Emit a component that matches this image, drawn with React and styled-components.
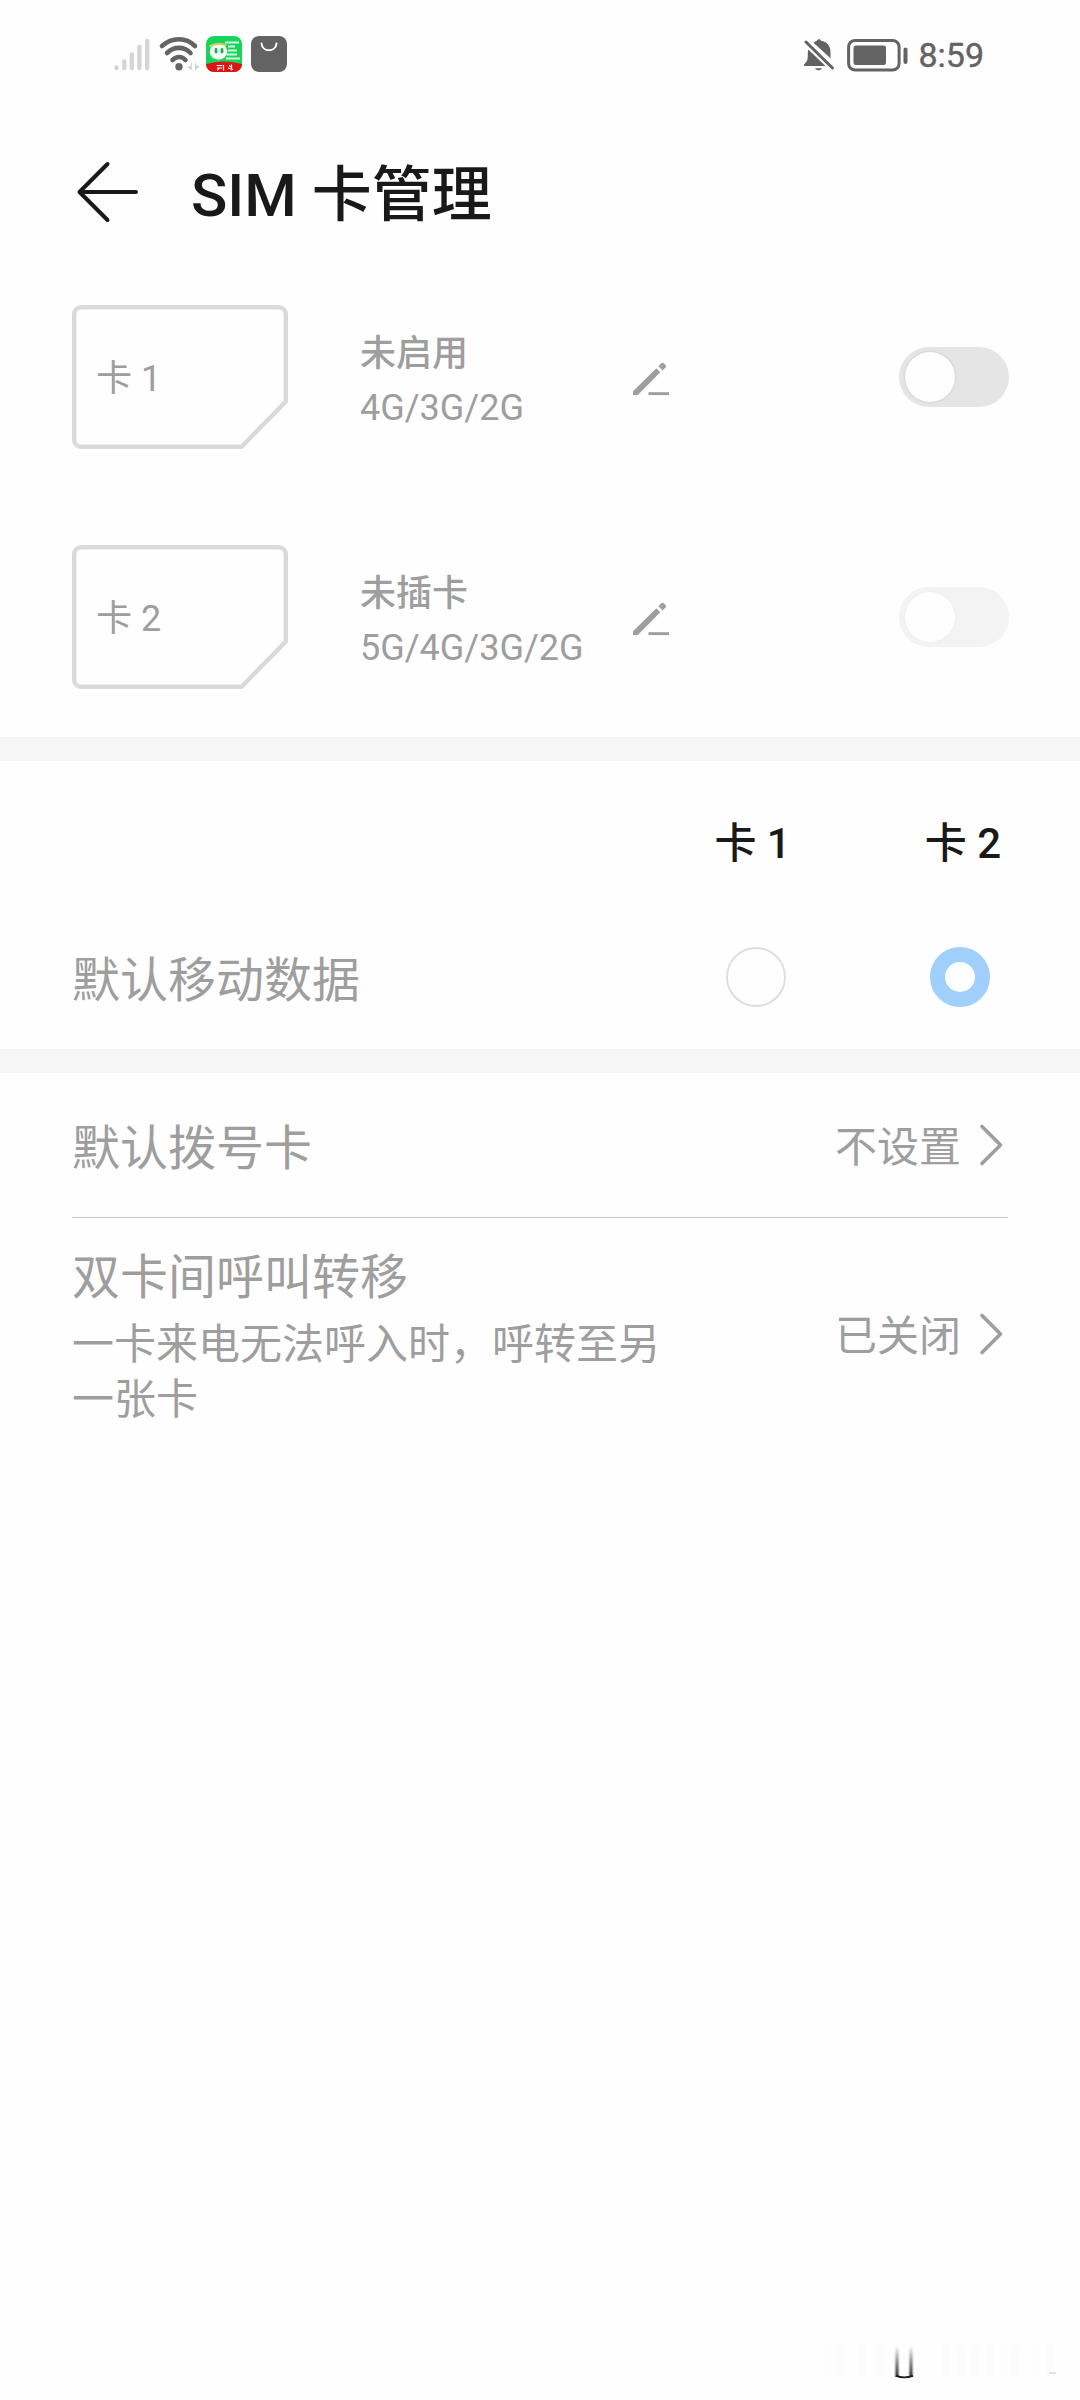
import React from "react";
import styled, { createGlobalStyle } from "styled-components";

const GlobalStyle = createGlobalStyle`
  *, *::before, *::after { box-sizing: border-box; }
  body {
    margin: 0;
    background: #fefefe;
    font-family: Roboto, "Noto Sans CJK SC", sans-serif;
    color: #191919;
  }
  svg { display: block; flex: none; }
`;

const Screen = styled.main`
  width: 1080px;
  height: 2400px;
  display: flex;
  flex-direction: column;
  background: #fefefe;
  overflow: hidden;
`;

const StatusBar = styled.div`
  height: 110px;
  flex: none;
  padding: 0 96px 0 113px;
  display: flex;
  align-items: center;
  justify-content: space-between;
`;

const StatusGroup = styled.div`
  display: flex;
  align-items: center;
  padding-bottom: ${(p) => p.$lift || 0}px;
`;

const StatusIcon = styled.svg`
  margin-left: ${(p) => p.$gap || 0}px;
`;

const Clock = styled.span`
  margin-left: 9px;
  font-size: 34px;
  line-height: 40px;
  color: #636363;
  -webkit-text-stroke: 0.4px #636363;
`;

const Header = styled.header`
  height: 147px;
  flex: none;
  padding: 22px 72px 0 75px;
  display: flex;
  align-items: center;
  gap: 50px;
`;

const BackButton = styled.button`
  margin: 0 0 5px;
  padding: 0;
  border: 0;
  background: none;
`;

const Title = styled.h1`
  margin: 0;
  padding-top: 2px;
  font-size: 60px;
  line-height: 70px;
  font-weight: 500;
`;

const SimRow = styled.section`
  height: 240px;
  flex: none;
  padding: 0 71px 0 72px;
  display: grid;
  grid-template-columns: 288px 273px 1fr auto;
  align-items: center;
  color: #9e9e9e;
`;

const SimShape = styled.div`
  width: 216px;
  height: 144px;
  display: grid;
  align-items: center;

  > * { grid-area: 1 / 1; }
`;

const SimName = styled.span`
  padding: 4px 0 0 24px;
  font-size: 36px;
  line-height: 42px;
`;

const SimInfo = styled.div`
  padding-top: 7px;
  font-size: 36px;
  line-height: 54px;
  white-space: nowrap;
`;

const SimState = styled.div`
  font-weight: 500;
`;

const EditButton = styled.button`
  width: 36px;
  margin: 0;
  padding: 3px 0 0;
  border: 0;
  background: none;
`;

const Toggle = styled.div`
  width: 110px;
  height: 60px;
  padding: 5px;
  border-radius: 30px;
  background: ${(p) => (p.$faint ? "#f3f3f3" : "#e5e5e5")};
`;

const Knob = styled.div`
  width: 50px;
  height: 50px;
  margin-left: 1px;
  border-radius: 50%;
  background: #fefefe;
  box-shadow: 0 0 3px rgba(0, 0, 0, ${(p) => (p.$faint ? 0.04 : 0.14)});
`;

const Band = styled.div`
  height: 24px;
  flex: none;
  background: #f6f6f6;
`;

const DataSection = styled.section`
  height: 288px;
  flex: none;
  padding: 0 72px;
`;

const ColumnHeads = styled.div`
  height: 142px;
  padding: 23px 7px 0 0;
  display: flex;
  align-items: center;
  justify-content: flex-end;
  gap: 134px;
  font-size: 42px;
  line-height: 50px;
  font-weight: 500;
`;

const DataRow = styled.div`
  height: 148px;
  padding-right: 18px;
  display: flex;
  align-items: center;
`;

const Label = styled.div`
  font-size: 48px;
  line-height: 56px;
  color: #9e9e9e;
`;

const DataLabel = styled(Label)`
  flex: 1;
  padding-top: 8px;
`;

const Radio = styled.div`
  width: 60px;
  height: 60px;
  margin-left: ${(p) => (p.$checked ? 144 : 0)}px;
  border-radius: 50%;
  border: ${(p) => (p.$checked ? "15px solid #a0cffc" : "2.5px solid #dfdfdf")};
`;

const Entry = styled.section`
  height: ${(p) => p.$height}px;
  flex: none;
  margin: 0 72px;
  padding-right: 4px;
  display: flex;
  align-items: center;
  justify-content: space-between;
  border-bottom: ${(p) => (p.$ruled ? "1px solid #c8c8c8" : "0")};
`;

const EntryText = styled.div`
  width: 600px;
  padding-top: ${(p) => p.$shift || 0}px;
`;

const Description = styled.p`
  margin: 11px 0 0;
  font-size: 42px;
  line-height: 55px;
  color: #9e9e9e;
`;

const EntryValue = styled.div`
  padding-bottom: ${(p) => p.$lift || 0}px;
  display: flex;
  align-items: center;
  gap: 17px;
  font-size: 42px;
  line-height: 50px;
  color: #9e9e9e;
`;

const ValueText = styled.span`
  padding-top: 6px;
`;

const Spacer = styled.div`
  flex: 1;
`;

const Footer = styled.footer`
  flex: none;
  padding: 0 24px 20px 0;
  display: flex;
  justify-content: flex-end;
`;

function Signal() {
  return (
    <StatusIcon width="38" height="36" viewBox="0 0 38 36" stroke="#d5d5d5" strokeWidth="4.400" strokeLinecap="round">
      <path d="M3.500 31.500v.5M11.300 25.500v6.500M18.800 18.500v13.500M26.400 11v21M34.200 5v27" />
    </StatusIcon>
  );
}

function Wifi() {
  return (
    <StatusIcon $gap={7} width="44" height="38" viewBox="0 0 44 38" fill="none" stroke="#636363" strokeWidth="4.600" strokeLinecap="round">
      <path d="M4 11C14 2 28 2 37 11M9 18C16 11.200 26 11.200 32.500 18M14.500 25C18.500 21 24 21 27.500 25" />
      <circle cx="21" cy="31.800" r="3.700" fill="#636363" stroke="none" />
      <path d="M33.800 26v9.500L29 31.500h3.200zM37 26v9.500l4.800-4.500h-3.200z" fill="#cfcfcf" stroke="none" />
    </StatusIcon>
  );
}

function GameBadge() {
  return (
    <StatusIcon $gap={4} width="36" height="36" viewBox="0 0 36 36">
      <defs>
        <clipPath id="badge"><rect width="36" height="36" rx="8" /></clipPath>
      </defs>
      <g clipPath="url(#badge)">
        <rect width="36" height="36" fill="#17d45d" />
        <path d="M19 6.500h14M22 10.500h7M22 14.500h9M21 18.500h10M20 22.500h14" stroke="#d3f9df" strokeWidth="1.800" />
        <ellipse cx="12.500" cy="15.500" rx="8.800" ry="8.200" fill="#f2fff2" />
        <path d="M3.500 10.500q8-4.500 17-1" fill="none" stroke="#d0d060" strokeWidth="2.200" />
        <path d="M10 13.500v2.500M16 13.500v2.500" stroke="#22ae59" strokeWidth="2.800" strokeLinecap="round" />
        <path d="M0 28q9-2.500 18-2.500t18 2.500v8H0z" fill="#df1414" />
        <path d="M10.500 29.500h6M11 32h5M13 32l-1.500 2.500M17.500 29v5.500M23 29.500l3 2M22 32l5 1.500M25.500 28.500v6" stroke="#fff" strokeWidth="1.200" fill="none" />
      </g>
    </StatusIcon>
  );
}

function Bag() {
  return (
    <StatusIcon $gap={9} width="36" height="36" viewBox="0 0 36 36">
      <rect width="36" height="36" rx="8" fill="#636363" />
      <path d="M10.500 7.500c1 9 14 9 15 0" fill="none" stroke="#fff" strokeWidth="2" strokeLinecap="round" />
    </StatusIcon>
  );
}

function Muted() {
  return (
    <StatusIcon width="32" height="34" viewBox="0 0 32 34" fill="#636363">
      <path d="M10.500 4.800C12 3.500 13 3 14 2.800c.5-2 3.500-2 4 0 6 1 9.500 5 9.500 11v6.500z" />
      <path d="M5.300 11.500 22.500 28H2c-1 0-1.400-1-.7-1.800C4.500 23 4.800 21 4.800 17c0-2 0-3.500.5-5.500z" />
      <path d="M12 30.200h7c-1.500 2.700-5.500 2.700-7 0z" />
      <path d="M3 4l26.500 26" stroke="#636363" strokeWidth="3" strokeLinecap="round" />
    </StatusIcon>
  );
}

function Battery() {
  return (
    <StatusIcon $gap={12} width="62" height="34" viewBox="0 0 62 34">
      <rect x="1.600" y="2.500" width="50.500" height="29.500" rx="6.500" fill="none" stroke="#636363" strokeWidth="3" />
      <rect x="6.500" y="7.500" width="32.500" height="19.500" rx="2.500" fill="#636363" />
      <rect x="56.500" y="9.500" width="4" height="16.500" rx="2" fill="#636363" />
    </StatusIcon>
  );
}

function BackArrow() {
  return (
    <svg width="66" height="66" viewBox="0 0 66 66" fill="none" stroke="#191919" strokeWidth="4" strokeLinecap="round" strokeLinejoin="round">
      <path d="M61 33H5M32.500 5 4.500 33l28 28" />
    </svg>
  );
}

function SimOutline() {
  return (
    <svg width="216" height="144" viewBox="0 0 216 144" fill="none" stroke="#d9dbda" strokeWidth="4.400">
      <path d="M9 2.200H207A6.800 6.800 0 0 1 213.800 9V96.500L169.500 141.800H9A6.800 6.800 0 0 1 2.200 135V9A6.800 6.800 0 0 1 9 2.200Z" />
    </svg>
  );
}

function Pencil() {
  return (
    <svg width="36" height="36" viewBox="0 0 36 36" fill="#9e9e9e">
      <path d="M23.300 7.300 27.300 11.300 4.800 34H0V30.200Z" />
      <path d="M28.200 2.300q1.300-1.300 2.600 0l1.700 1.700q1.300 1.300 0 2.600L29.600 9.400 25.400 5.200Z" />
      <rect x="15.500" y="31.200" width="20.500" height="2.900" />
    </svg>
  );
}

function Chevron() {
  return (
    <svg width="26" height="44" viewBox="0 0 26 44" fill="none" stroke="#9e9e9e" strokeWidth="3.600" strokeLinecap="round" strokeLinejoin="round">
      <path d="M4 3.500l18.500 18.500L4 40.500" />
    </svg>
  );
}

function Smudge() {
  const streaks = [0, 12, 34, 52, 118, 133, 147, 162, 176, 187, 208, 222];
  return (
    <svg width="232" height="36" viewBox="0 0 232 36">
      <defs>
        <linearGradient id="fade" x1="0" y1="0" x2="0" y2="1">
          <stop offset="0" stopColor="#333" stopOpacity="0" />
          <stop offset="0.5" stopColor="#333" stopOpacity="0.6" />
          <stop offset="1" stopColor="#111" stopOpacity="1" />
        </linearGradient>
        <linearGradient id="side" x1="0" y1="0" x2="1" y2="0">
          <stop offset="0" stopColor="#fefefe" />
          <stop offset="0.5" stopColor="#fefefe" stopOpacity="0" />
          <stop offset="1" stopColor="#fefefe" />
        </linearGradient>
      </defs>
      {streaks.map((x) => (
        <rect key={x} x={x} y="1" width="8" height="31" fill="#fcfcfc" />
      ))}
      <rect x="70" y="2" width="6" height="31" fill="url(#fade)" />
      <rect x="70" y="2" width="6" height="31" fill="url(#side)" />
      <rect x="84" y="2" width="6" height="31" fill="url(#fade)" />
      <rect x="84" y="2" width="6" height="31" fill="url(#side)" />
      <path d="M72 31.800q8 3 17 0" fill="none" stroke="#1c1c1c" strokeWidth="1.800" />
      <path d="M225 29h7" stroke="#dcdcdc" strokeWidth="1.500" />
    </svg>
  );
}

function SimCard({ name, state, networks, faint }) {
  return (
    <SimRow>
      <SimShape>
        <SimOutline />
        <SimName>{name}</SimName>
      </SimShape>
      <SimInfo>
        <SimState>{state}</SimState>
        <div>{networks}</div>
      </SimInfo>
      <EditButton aria-label="编辑">
        <Pencil />
      </EditButton>
      <Toggle $faint={faint}>
        <Knob $faint={faint} />
      </Toggle>
    </SimRow>
  );
}

export default function App() {
  return (
    <>
      <GlobalStyle />
      <Screen>
        <StatusBar>
          <StatusGroup $lift={2}>
            <Signal />
            <Wifi />
            <GameBadge />
            <Bag />
          </StatusGroup>
          <StatusGroup $lift={1}>
            <Muted />
            <Battery />
            <Clock>8:59</Clock>
          </StatusGroup>
        </StatusBar>
        <Header>
          <BackButton aria-label="返回">
            <BackArrow />
          </BackButton>
          <Title>SIM 卡管理</Title>
        </Header>
        <SimCard name="卡 1" state="未启用" networks="4G/3G/2G" />
        <SimCard name="卡 2" state="未插卡" networks="5G/4G/3G/2G" faint />
        <Band />
        <DataSection>
          <ColumnHeads>
            <span>卡 1</span>
            <span>卡 2</span>
          </ColumnHeads>
          <DataRow>
            <DataLabel>默认移动数据</DataLabel>
            <Radio />
            <Radio $checked />
          </DataRow>
        </DataSection>
        <Band />
        <Entry $height={145} $ruled>
          <EntryText $shift={7}>
            <Label>默认拨号卡</Label>
          </EntryText>
          <EntryValue $lift={1}>
            <ValueText>不设置</ValueText>
            <Chevron />
          </EntryValue>
        </Entry>
        <Entry $height={240}>
          <EntryText $shift={1}>
            <Label>双卡间呼叫转移</Label>
            <Description>一卡来电无法呼入时，呼转至另一张卡</Description>
          </EntryText>
          <EntryValue $lift={9}>
            <ValueText>已关闭</ValueText>
            <Chevron />
          </EntryValue>
        </Entry>
        <Spacer />
        <Footer>
          <Smudge />
        </Footer>
      </Screen>
    </>
  );
}
